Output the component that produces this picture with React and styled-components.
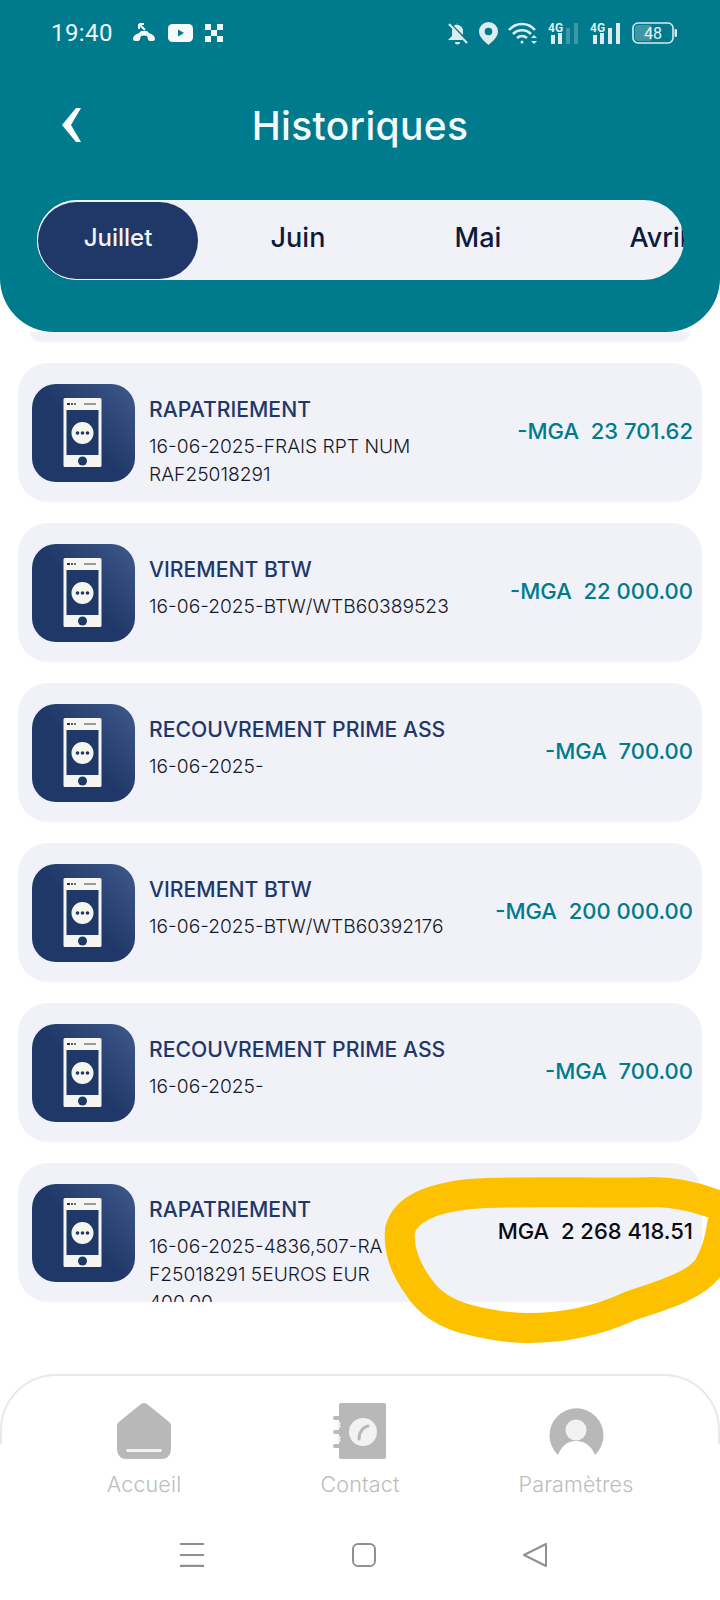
import React from "react";
import styled, { createGlobalStyle } from "styled-components";

const GlobalStyle = createGlobalStyle`
  html, body {
    margin: 0;
    padding: 0;
    background: #ffffff;
  }
  * {
    box-sizing: border-box;
  }
`;

const Page = styled.div`
  position: relative;
  width: 720px;
  height: 1600px;
  overflow: hidden;
  display: flex;
  flex-direction: column;
  background: #ffffff;
  font-family: Inter, "Liberation Sans", sans-serif;
`;

const Header = styled.header`
  height: 332px;
  flex-shrink: 0;
  display: flex;
  flex-direction: column;
  padding: 20px 0 0;
  background: #007a8d;
  border-radius: 0 0 54px 54px;
`;

const StatusBar = styled.div`
  height: 26px;
  display: flex;
  align-items: center;
  justify-content: space-between;
  padding: 0 43px 0 51px;
`;

const StatusGroup = styled.div`
  display: flex;
  align-items: center;
  gap: ${(p) => p.$gap}px;
`;

const Clock = styled.span`
  font-family: Roboto, sans-serif;
  font-size: 24px;
  color: #eef6f8;
  margin-right: 7px;
  letter-spacing: 0.4px;
`;

const TitleRow = styled.div`
  height: 60px;
  margin-top: 49px;
  display: grid;
  grid-template-columns: 1fr auto 1fr;
  align-items: center;
`;

const BackButton = styled.button`
  justify-self: start;
  margin-left: 60px;
  padding: 0;
  border: none;
  background: none;
  display: flex;
`;

const Title = styled.h1`
  margin: 0;
  font-size: 39px;
  font-weight: 500;
  color: #f4fafb;
  letter-spacing: 0.3px;
`;

const Tabs = styled.div`
  margin: 45px 36px 0 37px;
  height: 80px;
  padding: 2px 0 1px 1px;
  display: flex;
  gap: 20px;
  overflow: hidden;
  flex-shrink: 0;
  background: #f0f2f8;
  border-radius: 40px;
  box-shadow: inset 2px 0 0 #ffffff;
`;

const Tab = styled.div`
  width: 160px;
  flex-shrink: 0;
  display: flex;
  align-items: center;
  justify-content: center;
  border-radius: 40px;
  font-size: ${(p) => (p.$active ? 24 : 27)}px;
  font-weight: 500;
  padding-bottom: 7px;
  color: ${(p) => (p.$active ? "#f0f2f8" : "#0e1a3c")};
  background: ${(p) => (p.$active ? "#1f3868" : "transparent")};
`;

const Peek = styled.div`
  height: 10px;
  margin: 0 30px;
  flex-shrink: 0;
  background: #f0f2f8;
  border-radius: 0 0 26px 26px;
`;

const List = styled.div`
  display: flex;
  flex-direction: column;
  gap: 21px;
  padding: 21px 18px 0;
`;

const Card = styled.div`
  height: 139px;
  flex-shrink: 0;
  overflow: hidden;
  display: flex;
  justify-content: space-between;
  padding: 21px 9px 0 14px;
  background: #f0f2f8;
  border-radius: 30px;
`;

const CardMain = styled.div`
  display: flex;
  gap: 14px;
`;

const Thumb = styled.svg`
  width: 103px;
  height: 98px;
  flex-shrink: 0;
`;

const CardText = styled.div`
  padding-top: 10px;
`;

const CardTitle = styled.div`
  font-size: 21.2px;
  line-height: 30px;
  font-weight: 500;
  color: #1f3868;
  white-space: nowrap;
`;

const CardSub = styled.div`
  margin-top: 8px;
`;

const SubLine = styled.div`
  font-size: 19.2px;
  line-height: 28px;
  font-weight: 300;
  color: #16182a;
  white-space: nowrap;
`;

const Amount = styled.div`
  margin-top: 32px;
  font-size: 22px;
  line-height: 30px;
  font-weight: 500;
  white-space: pre;
  color: ${(p) => (p.$credit ? "#0a0a14" : "#007a8d")};
`;

const Scribble = styled.svg`
  position: absolute;
  left: 0;
  top: 1150px;
  width: 720px;
  height: 210px;
  pointer-events: none;
`;

const Footer = styled.footer`
  position: relative;
  margin-top: auto;
  height: 226px;
  flex-shrink: 0;
  padding-top: 29px;
  background: #ffffff;
  &::before {
    content: "";
    position: absolute;
    left: 0;
    right: 0;
    top: 0;
    height: 68px;
    border: 2px solid #e8e8e8;
    border-bottom: none;
    border-radius: 56px 56px 0 0;
    pointer-events: none;
  }
`;

const NavItems = styled.nav`
  display: flex;
  justify-content: space-between;
  padding: 0 72px;
`;

const NavItem = styled.div`
  width: 144px;
  display: flex;
  flex-direction: column;
  align-items: center;
  gap: 8px;
  font-size: 21.5px;
  line-height: 34px;
  font-weight: 300;
  letter-spacing: 0.15px;
  color: #bdbdbd;
`;

const NavIcon = styled.svg`
  width: 60px;
  height: 56px;
`;

const SystemBar = styled.div`
  margin-top: 42px;
  padding-left: 179px;
  display: flex;
  gap: 147px;
  align-items: center;
`;

const rows = [
  { title: "RAPATRIEMENT", sub: ["16-06-2025-FRAIS RPT NUM", "RAF25018291"], amount: "-MGA  23 701.62" },
  { title: "VIREMENT BTW", sub: ["16-06-2025-BTW/WTB60389523"], amount: "-MGA  22 000.00" },
  { title: "RECOUVREMENT PRIME ASS", sub: ["16-06-2025-"], amount: "-MGA  700.00" },
  { title: "VIREMENT BTW", sub: ["16-06-2025-BTW/WTB60392176"], amount: "-MGA  200 000.00" },
  { title: "RECOUVREMENT PRIME ASS", sub: ["16-06-2025-"], amount: "-MGA  700.00" },
  {
    title: "RAPATRIEMENT",
    sub: ["16-06-2025-4836,507-RA", "F25018291 5EUROS EUR", "400.00"],
    amount: "MGA  2 268 418.51",
    credit: true,
  },
];

const PhoneThumb = ({ id }) => (
  <Thumb viewBox="0 0 103 98">
    <defs>
      <linearGradient id={id} x1="0.1" y1="0.9" x2="1" y2="0.1">
        <stop offset="0.45" stopColor="#1f3868" />
        <stop offset="1" stopColor="#3c5688" />
      </linearGradient>
    </defs>
    <rect width="103" height="98" rx="24" fill={`url(#${id})`} />
    <rect x="31.5" y="14" width="38" height="69" rx="1.5" fill="#f5f5f2" />
    <rect x="34.5" y="26" width="32" height="45" fill="#1f3868" />
    <rect x="35" y="19" width="3" height="2" fill="#333" />
    <rect x="39" y="19" width="2" height="2" fill="#555" />
    <rect x="42" y="19" width="2" height="2" fill="#777" />
    <rect x="52" y="19" width="12" height="2" fill="#999" />
    <circle cx="50.5" cy="49" r="11" fill="#f5f5f2" />
    <circle cx="45.5" cy="49" r="1.8" fill="#1f3868" />
    <circle cx="50.5" cy="49" r="1.8" fill="#1f3868" />
    <circle cx="55.5" cy="49" r="1.8" fill="#1f3868" />
    <circle cx="50.5" cy="77" r="4.5" fill="#1f3868" />
  </Thumb>
);

const LeftStatusIcons = () => (
  <>
    <svg width="24" height="20" viewBox="0 0 24 20" fill="#f2f8f9">
      <path d="M1 16c0-3 3-5 6-6l2-2h6l2 2c3 1 6 3 6 6 0 1-1 2-2 2h-3c-1 0-2-1-2-2l-1-3c-2-.7-4-.7-6 0l-1 3c0 1-1 2-2 2H3c-1 0-2-1-2-2z" />
      <path d="M7 1l6 6M7 1v5M7 1h5" stroke="#f2f8f9" strokeWidth="2" fill="none" />
    </svg>
    <svg width="25" height="18" viewBox="0 0 25 18">
      <rect width="25" height="18" rx="4.5" fill="#f7fbfc" />
      <path d="M10 5.5l6 3.500-6 3.500z" fill="#007a8d" />
    </svg>
    <svg width="18" height="18" viewBox="0 0 18 18" fill="#f2f8f9">
      <rect width="6" height="6" />
      <rect x="12" width="6" height="6" />
      <rect y="12" width="6" height="6" />
      <rect x="12" y="12" width="6" height="6" />
      <rect x="6" y="6" width="6" height="6" />
    </svg>
  </>
);

const Signal = ({ dim }) => (
  <svg width="32" height="22" viewBox="0 0 32 22">
    <text x="0" y="10" fontFamily="Roboto, sans-serif" fontSize="12" fontWeight="700" fill="#dcecef">4G</text>
    <rect x="3" y="13" width="4" height="9" fill="#dcecef" />
    <rect x="10" y="11" width="4" height="11" fill="#dcecef" />
    <rect x="18" y="6" width="4" height="16" fill={dim ? "#3f97a6" : "#dcecef"} />
    <rect x="26" y="1" width="4" height="21" fill={dim ? "#3f97a6" : "#dcecef"} />
  </svg>
);

const RightStatusIcons = () => (
  <>
    <svg width="22" height="23" viewBox="0 0 22 23" fill="#dcecef">
      <path d="M11 1c-1 0-2 1-2 2-3 1-4 3-4 6v5l-4 4h15L6 5" />
      <path d="M8 3c3-1 8 1 8 6v4L7 4z" />
      <path d="M8 20h5a2.500 2.500 0 0 1-5 0z" />
      <path d="M2 2l18 19" stroke="#dcecef" strokeWidth="2" />
    </svg>
    <svg width="19" height="23" viewBox="0 0 19 23">
      <path d="M9.500 0a9.500 9.500 0 0 1 9.500 9.500c0 5-5 10-9.500 13.500C5 19.500 0 14.500 0 9.500A9.500 9.500 0 0 1 9.500 0z" fill="#dcecef" />
      <circle cx="9.500" cy="9.500" r="3.800" fill="#007a8d" />
    </svg>
    <svg width="30" height="23" viewBox="0 0 30 23" fill="none" stroke="#dcecef" strokeWidth="2.600">
      <path d="M1 8c7-8 19-8 26 0" />
      <path d="M5 12c5-5 13-5 18 0" />
      <path d="M9 16c3-2.500 7-2.500 10 0" />
      <circle cx="14" cy="20" r="1.500" fill="#dcecef" stroke="none" />
      <path d="M23 16h6l-3-3zM23 19h6l-3 3z" fill="#dcecef" stroke="none" />
    </svg>
    <Signal dim />
    <Signal />
    <svg width="45" height="22" viewBox="0 0 45 22">
      <rect x="1" y="1" width="40" height="20" rx="5" fill="none" stroke="#dcecef" strokeWidth="1.600" />
      <rect x="3" y="3" width="17" height="16" rx="3" fill="#3f97a6" />
      <rect x="42.500" y="7" width="2.500" height="8" rx="1" fill="#dcecef" />
      <text x="21" y="17" textAnchor="middle" fontFamily="Roboto, sans-serif" fontSize="16" fill="#e6f2f4">48</text>
    </svg>
  </>
);

const App = () => (
  <Page>
    <GlobalStyle />
    <Header>
      <StatusBar>
        <StatusGroup $gap={12}>
          <Clock>19:40</Clock>
          <LeftStatusIcons />
        </StatusGroup>
        <StatusGroup $gap={10}>
          <RightStatusIcons />
        </StatusGroup>
      </StatusBar>
      <TitleRow>
        <BackButton>
          <svg width="24" height="36" viewBox="0 0 24 36">
            <path d="M21 1h-5L2 18l14 17h5L11 18z" fill="#ffffff" />
          </svg>
        </BackButton>
        <Title>Historiques</Title>
      </TitleRow>
      <Tabs>
        <Tab $active>Juillet</Tab>
        <Tab>Juin</Tab>
        <Tab>Mai</Tab>
        <Tab>Avril</Tab>
      </Tabs>
    </Header>
    <Peek />
    <List>
      {rows.map((row, i) => (
        <Card key={i}>
          <CardMain>
            <PhoneThumb id={`thumb-${i}`} />
            <CardText>
              <CardTitle>{row.title}</CardTitle>
              <CardSub>
                {row.sub.map((line) => (
                  <SubLine key={line}>{line}</SubLine>
                ))}
              </CardSub>
            </CardText>
          </CardMain>
          <Amount $credit={row.credit}>{row.amount}</Amount>
        </Card>
      ))}
    </List>
    <Scribble viewBox="0 0 720 210" fill="none">
      <path
        d="M740 65C710 50 680 42 652 42C600 44 520 40 470 44C430 48 405 60 400 80C398 100 405 118 418 136C428 152 445 164 470 170C490 175 510 178 528 178C565 178 600 170 630 156C660 146 695 136 708 118C716 104 720 90 722 75"
        stroke="#fdc100"
        strokeWidth="30"
        strokeLinecap="round"
        strokeLinejoin="round"
      />
    </Scribble>
    <Footer>
      <NavItems>
        <NavItem>
          <NavIcon viewBox="0 0 60 56" fill="#b8b8b8">
            <path d="M30 0c1 0 2 .5 3 1l21 17c2 1.500 3 3 3 5v23c0 6-4 10-9 10H12c-5 0-9-4-9-10V23c0-2 1-3.500 3-5L27 1c1-.5 2-1 3-1z" />
            <rect x="12.500" y="46" width="35" height="3" fill="#f2f2f2" />
          </NavIcon>
          Accueil
        </NavItem>
        <NavItem>
          <NavIcon viewBox="0 0 60 56" fill="#b8b8b8">
            <rect x="9" y="0" width="47" height="56" rx="2" />
            <circle cx="33" cy="29" r="14" fill="#f2f2f2" />
            <path d="M38 23c-5 1-9 6-9 13" stroke="#b8b8b8" strokeWidth="3" fill="none" strokeLinecap="round" />
            <path d="M5 15h9M5 29h9M5 43h9" stroke="#b8b8b8" strokeWidth="4" strokeLinecap="round" />
            <path d="M9 19v6M9 33v6" stroke="#f2f2f2" strokeWidth="2.500" />
          </NavIcon>
          Contact
        </NavItem>
        <NavItem>
          <NavIcon viewBox="0 0 60 56" fill="#b8b8b8">
            <path d="M12 52A27 27 0 1 1 49 52C45 42 38 38 30 38S16 42 12 52z" />
            <circle cx="30" cy="27" r="10.500" fill="#f2f2f2" />
          </NavIcon>
          Paramètres
        </NavItem>
      </NavItems>
      <SystemBar>
        <svg width="26" height="24" viewBox="0 0 26 24" stroke="#909090" strokeWidth="2">
          <path d="M1 1h24M1 12h24" />
          <path d="M1 23h24" strokeWidth="2.500" />
        </svg>
        <svg width="24" height="24" viewBox="0 0 24 24" fill="none" stroke="#909090" strokeWidth="2">
          <rect x="1" y="1" width="22" height="22" rx="5" />
        </svg>
        <svg width="25" height="24" viewBox="0 0 25 24" fill="none" stroke="#909090" strokeWidth="2" strokeLinejoin="round">
          <path d="M23 1v22L1 12z" />
        </svg>
      </SystemBar>
    </Footer>
  </Page>
);

export default App;
